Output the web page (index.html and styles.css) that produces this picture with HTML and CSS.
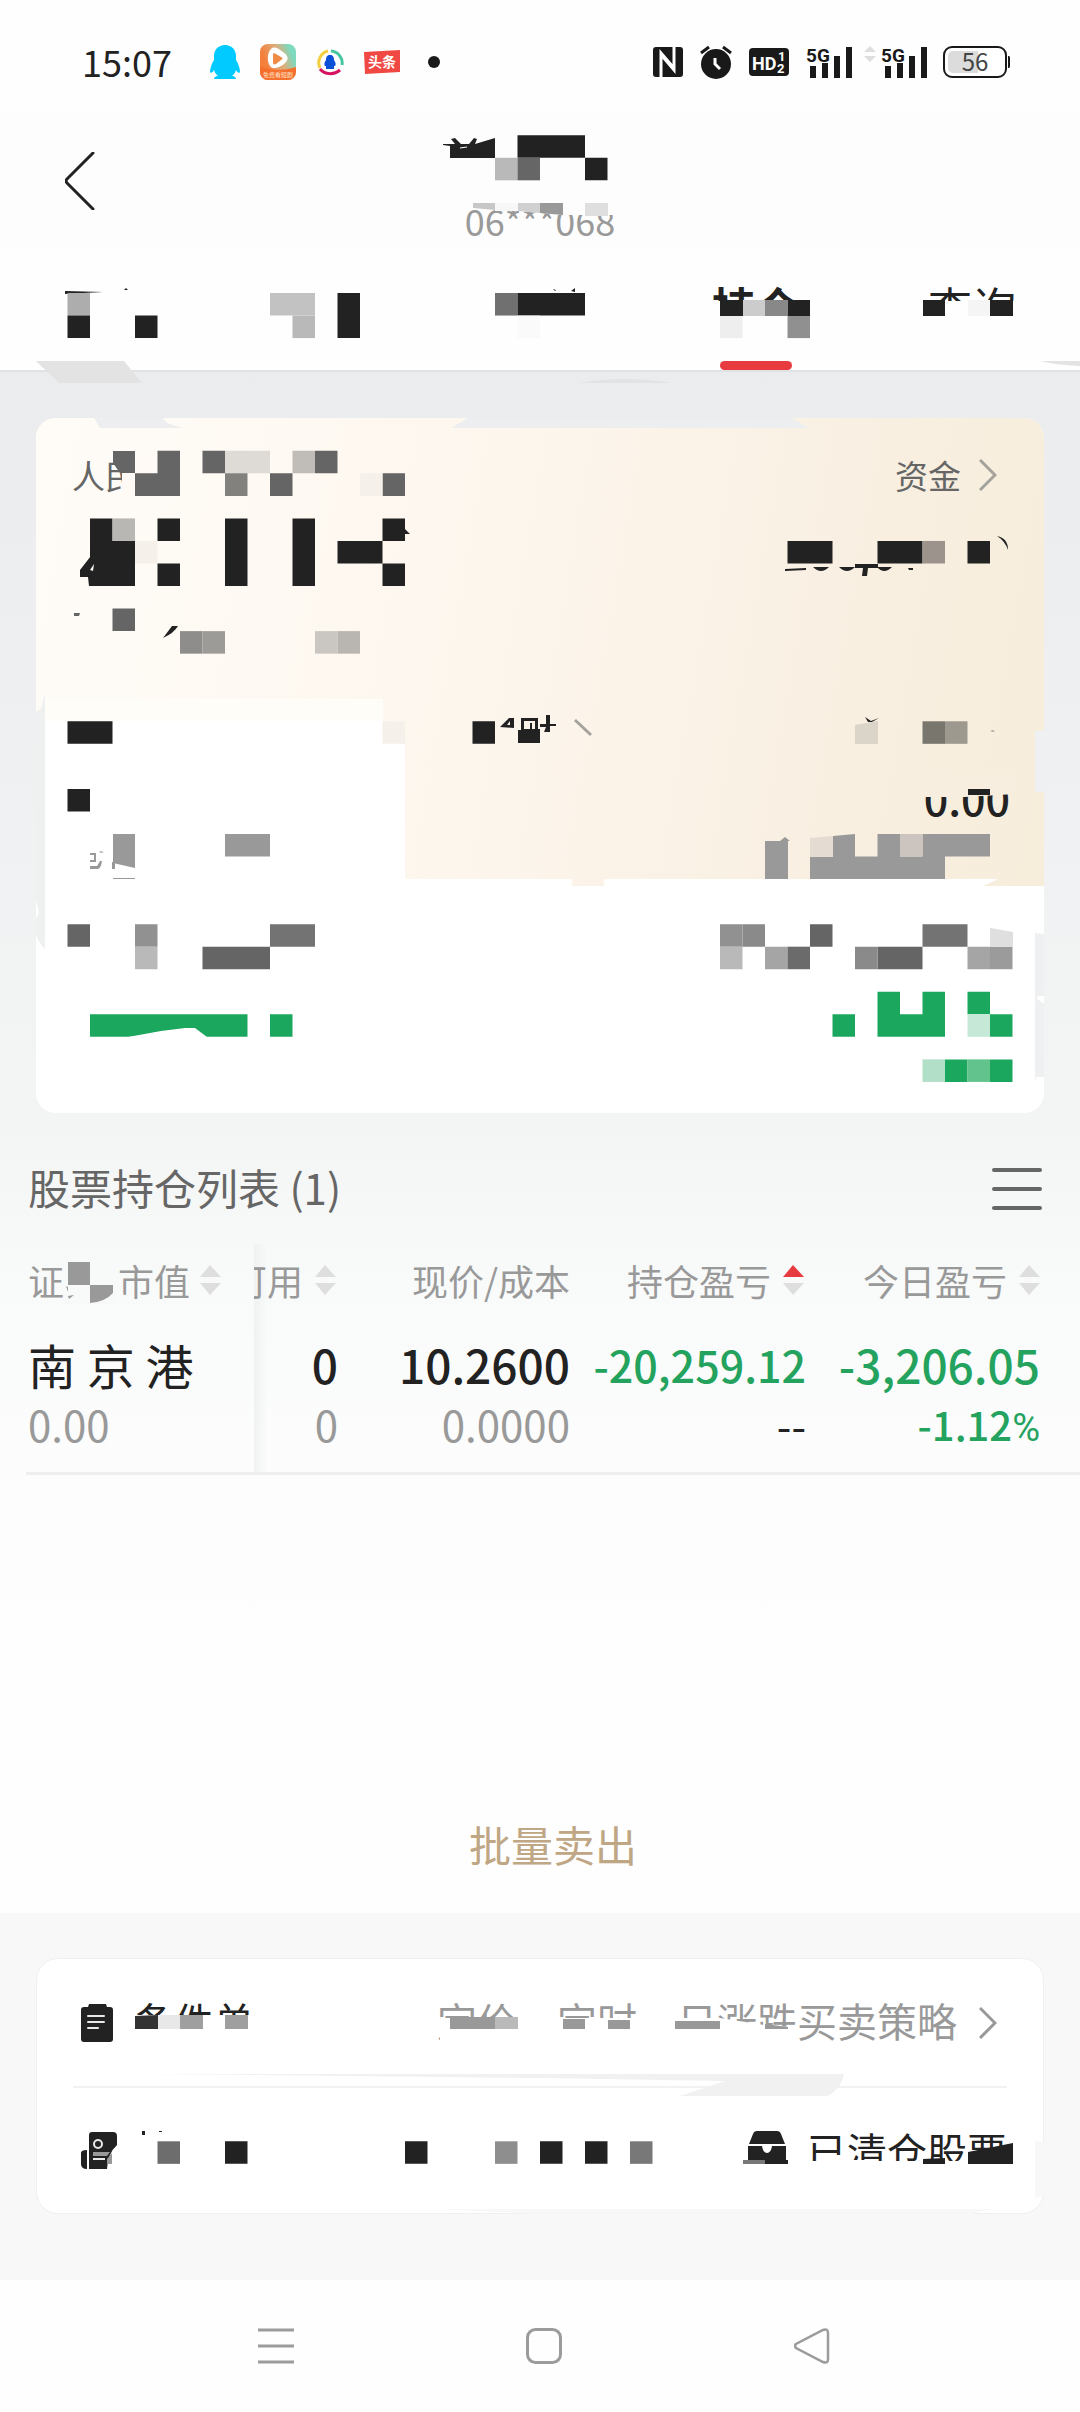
FILE: index.html
```html
<!DOCTYPE html>
<html lang="zh-CN">
<head>
    <meta charset="UTF-8">
    <meta name="viewport" content="width=device-width, initial-scale=1.0">
    <title>持仓</title>
    <link rel="stylesheet" href="styles.css">
</head>
<body>
    <div class="status-bar">
        <div class="status-left">
            <span class="clock">15:07</span>
            <svg class="app-icon" width="30" height="36" viewBox="0 0 30 36">
                <path fill="#00caff" d="M15 1C8 1 4 6 4 12v4C2 19 0 24 0 28c1 2 3 0 4-2 1 3 2 4 4 6-3 0-4 2-4 3h22c0-1-1-3-4-3 2-2 3-3 4-6 1 2 3 4 4 2 0-4-2-9-4-12v-4C26 6 22 1 15 1z"/>
            </svg>
            <svg class="app-icon" width="36" height="36" viewBox="0 0 36 36">
                <defs>
                    <linearGradient id="video-bg" x1="0" y1="0.4" x2="1" y2="0">
                        <stop offset="0.1" stop-color="#f4803c"/>
                        <stop offset="0.5" stop-color="#dcae7c"/>
                        <stop offset="0.8" stop-color="#7fd9bd"/>
                    </linearGradient>
                </defs>
                <rect width="36" height="36" rx="8" fill="url(#video-bg)"/>
                <path fill="#f56f2c" d="M0 22c9 5 24 5 36 1v5a8 8 0 0 1-8 8H8a8 8 0 0 1-8-8z"/>
                <path fill="#fff" d="M11 5c3-3 7-1 12 3 6 4 6 8 1 12-5 4-11 6-14 2C7 18 7 9 11 5z"/>
                <path fill="#f08b45" d="M13 11c0-2 1-2 3-1l5 3c2 1 2 2 0 3l-5 4c-2 1-3 0-3-2z"/>
                <text x="18" y="33" text-anchor="middle" class="tiny-label">免费看短剧</text>
            </svg>
            <svg class="app-icon" width="28" height="28" viewBox="0 0 28 28" fill="none" stroke-width="3">
                <path stroke="#f3cf3f" d="M4 20A12 12 0 0 1 12 3"/>
                <path stroke="#45c5a0" d="M15 3a12 12 0 0 1 11 14"/>
                <path stroke="#d8125f" d="M4 21c5 6 14 6 20 1"/>
                <path fill="#0a4fd8" d="M14 7c-3 0-4 2-4 5-2 3-2 5-1 6l1 0v3h8v-3h1c1-1 1-3-1-6 0-3-1-5-4-5z"/>
            </svg>
            <svg class="app-icon" width="36" height="24" viewBox="0 0 36 24">
                <path fill="#f04843" d="M0 2 36 0v22L1 24z"/>
                <text x="18" y="17" text-anchor="middle" class="news-label">头条</text>
            </svg>
            <span class="dot"></span>
        </div>
        <div class="status-right">
            <svg width="30" height="30" viewBox="0 0 30 30">
                <rect width="30" height="30" rx="3" fill="#191919"/>
                <path fill="none" stroke="#fff" stroke-width="3" d="M8 30V6l12 14M21 0v23L10 10"/>
            </svg>
            <svg class="alarm" width="32" height="34" viewBox="0 0 32 34">
                <circle cx="16" cy="19" r="15" fill="#191919"/>
                <path fill="none" stroke="#191919" stroke-width="3" d="M1 8l8-6M31 8l-8-6"/>
                <path fill="none" stroke="#fff" stroke-width="3" d="M15 13v6l5 5"/>
            </svg>
            <svg width="40" height="28" viewBox="0 0 40 28">
                <rect width="40" height="28" rx="4" fill="#191919"/>
                <text x="3" y="22" class="hd-label">HD</text>
                <text x="29" y="13" class="hd-number">1</text>
                <text x="28" y="25" class="hd-number">2</text>
            </svg>
            <svg class="signal" width="47" height="36" viewBox="0 0 47 36">
                <text x="0" y="18" class="net-label">5G</text>
                <path fill="#191919" d="M4 22h6v12H4zM16 19h6v15h-6zM28 12h6v22h-6zM40 3h6v31h-6z"/>
            </svg>
            <svg class="traffic" width="12" height="16" viewBox="0 0 12 16">
                <path fill="#dedede" d="M6 0l6 6H0zM6 16l6-6H0z"/>
            </svg>
            <svg class="signal-last" width="47" height="36" viewBox="0 0 47 36">
                <text x="0" y="18" class="net-label">5G</text>
                <path fill="#191919" d="M4 22h6v12H4zM16 19h6v15h-6zM28 12h6v22h-6zM40 3h6v31h-6z"/>
            </svg>
            <svg width="68" height="40" viewBox="0 -4 68 40">
                <rect x="1" y="1" width="62" height="30" rx="8" fill="#fff" stroke="#191919" stroke-width="2"/>
                <path fill="#dcdcdc" d="M10 5h25v22H10a5 5 0 0 1-5-5V10a5 5 0 0 1 5-5z"/>
                <path fill="#191919" d="M65 10h1a2 2 0 0 1 1 2v8a2 2 0 0 1-1 2h-1z"/>
                <text x="32" y="25" text-anchor="middle" class="battery-label">56</text>
            </svg>
        </div>
    </div>

    <header class="header">
        <button class="back-btn" aria-label="返回">
            <svg width="30" height="58" viewBox="0 0 30 58" fill="none" stroke="#222" stroke-width="3" stroke-linecap="round">
                <path d="M28 1L2 27q-2 2 0 4L28 57"/>
            </svg>
        </button>
        <div class="account">06***068</div>
        <!-- masked account name -->
        <svg class="mask" viewBox="0 112 1080 138" aria-hidden="true">
            <path fill="#fdfdfd" d="M518 205h95v10l-50 0-45-4z"/>
            <path fill="#222" d="M443 144h12l-4-5 4-1 6 6h8l5-6 3 1-2 5 20-6v20h-45v-12l-7-1z"/>
            <path stroke="#fdfdfd" d="M460 148l7-1"/>
            <g transform="scale(22.5 22.54)">
                <path fill="#222" d="M23 6h3v1h-3zM26 7h1v1h-1z"/>
                <path fill="#b9b9b9" d="M22 7h1v1h-1z"/>
                <path fill="#666" d="M23 7h1v1h-1z"/>
            </g>
            <path fill="#c7c7c7" d="M473 203h22v7l-22-2z"/>
            <path fill="#f7f7f7" d="M495 203h23v8h-23z"/>
            <path fill="#d0d0d0" d="M518 203h22v10l-22-2z"/>
            <path fill="#999" d="M540 203h23v12l-23-2z"/>
            <path fill="#dfdfdf" d="M585 203h23v13h-23z"/>
        </svg>
    </header>

    <nav class="tabs">
        <button class="tab" aria-label="买入"></button>
        <button class="tab" aria-label="卖出"></button>
        <button class="tab" aria-label="撤单"></button>
        <button class="tab active">持仓</button>
        <button class="tab">查询</button>
        <svg class="mask" viewBox="0 250 1080 134" aria-hidden="true">
            <path fill="#fefefe" d="M700 301h340v45H700z"/>
            <path fill="#222" d="M65 291l38 1-38 2zM124 290l2-2 2 2zM553 289l3 1-1 1zM571 291l4-3v4z"/>
            <g transform="scale(22.5 22.54)">
                <path fill="#adadad" d="M3 13h1v1h-1z"/>
                <path fill="#222" d="M3 14h1v1h-1zM6 14h1v1h-1zM15 13h1v2h-1zM24 13h2v1h-2z"/>
                <path fill="#c2c2c2" d="M12 13h2v1h-2z"/>
                <path fill="#b9b9b9" d="M13 14h1v1h-1z"/>
                <path fill="#707070" d="M22 13h1v1h-1z"/>
                <path fill="#222" d="M23 13h1v1h-1z"/>
                <path fill="#fafafa" d="M23 14h1v1h-1z"/>
                <path fill="#eee" d="M32 14h1v1h-1z"/>
                <path fill="#909090" d="M35 14h1v1h-1z"/>
            </g>
            <path fill="#222" d="M720 300h23v16h-23zM788 300h22v16h-22zM923 300h22v16h-22zM990 300h23v16h-23z"/>
            <path fill="#ccc" d="M743 300h22v16h-22z"/>
            <path fill="#888" d="M765 300h23v16h-23z"/>
            <path fill="#f5f5f5" d="M968 300h22v16h-22z"/>
            <path fill="#e3e3e3" d="M36 361h88l18 22H59zM1040 361h40v5q-25-1-40-5zM578 383q47-8 94 0z"/>
        </svg>
    </nav>

    <main class="main">
        <section class="summary">
            <div class="summary-top">
                <div class="summary-row">
                    <span>人民</span>
                    <a class="funds" href="#">资金
                        <svg width="18" height="32" viewBox="0 0 18 32" fill="none" stroke="#a5a29c" stroke-width="3"><path d="M1 1l15 15L1 31"/></svg>
                    </a>
                </div>
                <div class="amount">0.00</div>
            </div>
            <div class="summary-bottom"></div>
            <!-- masked balances -->
            <svg class="mask" viewBox="36 418 1008 695" aria-hidden="true">
                <path fill="#edeef0" d="M94 418h69l4 5 15 5h-82zM468 418h323l18 10H451z"/>
                <path fill="#fffdf8" d="M45 699h338v22H45z"/>
                <path fill="#fff" d="M45 721h360v158h167v7H36v-154h9z"/>
                <path fill="#fff" d="M604 879h394l-17 8H604z"/>
                <path fill="#eff0f0" d="M36 712l5-3 4-15v255q-7-7-9-15v-15l3-7-3-12z"/>
                <path fill="#eff0f1" d="M1035 731h9v61h-9zM1035 933l9 1v62l-7 0 7 6v75h-8l-1 6z"/>
                <path fill="#fff" d="M1036 998l8-2v8z"/>
                <path fill="#fffaf5" d="M122 455h58v42h-58z"/>
                <path fill="#f8eedf" d="M915 772h100v22l-50 3h-50z"/>
                <g transform="scale(22.5 22.54)">
                    <path fill="#656565" d="M7 20h1v1h-1zM9 20h1v1h-1zM14 20h1v1h-1zM6 21h2v1h-2zM12 21h1v1h-1zM17 21h1v1h-1zM5 27h1v1h-1z"/>
                    <path fill="#dedbd6" d="M10 20h2v1h-2z"/>
                    <path fill="#c0bcb7" d="M13 20h1v1h-1z"/>
                    <path fill="#83817d" d="M10 21h1v1h-1z"/>
                    <path fill="#f5f0e9" d="M16 21h1v1h-1zM6 24h1v1h-1zM17 32h1v1h-1z"/>
                    <path fill="#222" d="M4 23h1v1h1v2h-2zM7 23h1v1h-1zM7 25h1v1h-1zM10 23h1v3h-1zM13 23h1v3h-1zM17 23h1v1h-1zM15 24h2v1h-2zM17 25h1v1h-1z"/>
                    <path fill="#b9b7b3" d="M5 23h1v1h-1z"/>
                    <path fill="#8e8d8b" d="M8 28h1v1h-1z"/>
                    <path fill="#9d9b97" d="M9 28h1v1h-1z"/>
                    <path fill="#cac6c1" d="M14 28h1v1h-1z"/>
                    <path fill="#b9b5b0" d="M15 28h1v1h-1z"/>
                    <path fill="#222" d="M35 24h2v1h-2zM39 24h2v1h-2zM43 24h1v1h-1zM3 32h2v1h-2zM21 32h1v1h-1zM3 35h1v1h-1z"/>
                    <path fill="#9b938c" d="M41 24h1v1h-1z"/>
                    <path fill="#79766e" d="M41 32h1v1h-1z"/>
                    <path fill="#9e998f" d="M42 32h1v1h-1z"/>
                    <path fill="#999" d="M10 37h2v1h-2zM39 37h1v1h-1zM41 37h3v1h-3zM34 38h1v1h-1zM36 38h6v1h-6z"/>
                    <path fill="#ccc5bf" d="M40 37h1v1h-1z"/>
                    <path fill="#656565" d="M3 41h1v1h-1zM9 42h3v1h-3zM36 41h1v1h-1zM39 42h2v1h-2z"/>
                    <path fill="#919191" d="M6 41h1v1h-1zM32 41h1v1h-1z"/>
                    <path fill="#8a8a8a" d="M33 41h1v1h-1zM38 42h1v1h-1z"/>
                    <path fill="#737373" d="M12 41h2v1h-2zM41 41h2v1h-2z"/>
                    <path fill="#b9b9b9" d="M6 42h1v1h-1zM32 42h1v1h-1z"/>
                    <path fill="#a5a5a5" d="M34 42h1v1h-1zM43 42h1v1h-1z"/>
                    <path fill="#6b6b6b" d="M35 42h1v1h-1z"/>
                    <path fill="#9b9b9b" d="M44 42h1v1h-1z"/>
                    <path fill="#1ba85e" d="M4 45h7v1h-7zM12 45h1v1h-1zM37 45h1v1h-1zM39 44h1v1h1v-1h1v2h-3zM43 44h1v1h-1zM44 45h1v1h-1zM42 47h1v1h-1zM44 47h1v1h-1z"/>
                    <path fill="#c6e9d7" d="M43 45h1v1h-1z"/>
                    <path fill="#b1dfc7" d="M41 47h1v1h-1z"/>
                    <path fill="#62c38d" d="M43 47h1v1h-1z"/>
                </g>
                <path fill="#656565" d="M113 451h22v22h-15l-7-10zM74 613h6l-1 3h-5z"/>
                <path fill="#222" d="M90 551l5 2-5 6v27h-1l-1-9h-8v-7l14-18zM405 529l5 5h-10zM163 638l9-12h6q-4 7-15 12z"/>
                <path fill="#fffbf5" d="M90 570l4-6-1 7z"/>
                <path fill="#222" d="M785 569l21-1v2l-21 1zM813 567h16q-8 8-16 0zM839 567h16q-8 8-16 0zM855 564h23v4h-10l-1 8h-5l1-8h-8zM877 567h15q-8 8-15 0zM908 568h5v2h-4zM997 536q11 2 11 14-3-9-11-14z"/>
                <path fill="#222" d="M500 727l9-9h5v10zM521 718h17v11h2v14h-22v-13h3zM540 724h6v-9h4v9h6v2h-6v6h-6l2-5h-6zM865 717l6 4 8-3-7 4h-4z"/>
                <path fill="#fbf3e8" d="M507 725l3-4v4zM524 721h11v8h-3v-6h-2v6h-6z"/>
                <path fill="none" stroke="#a5a29c" stroke-width="3" d="M575 720l16 15"/>
                <path fill="#dad4c9" d="M855 725l23-4v23h-23z"/>
                <path fill="#999" d="M990 731l3-1 2 2zM90 853h6v9h-6v-2h4v-5h-4zM99 851l5 1-3 1zM90 866h7l3-5h2q-1 7-4 8h-8zM112 862h3v7h-3zM113 834h22v34l-22-5zM113 878h22v1h-22z"/>
                <path fill="#999" d="M765 841h15l5-4 5 4h-2v38h-23zM833 836l22-2v23h-22z"/>
                <path fill="#e4dcd2" d="M810 838l23-2v21h-23z"/>
                <path fill="#222" d="M968 789h22v6h-22z"/>
                <path fill="#dfdfdf" d="M990 928l23 4v15h-23z"/>
                <path fill="#fff" d="M128 1037l33-6 24-3h10l12 9z"/>
            </svg>
        </section>

        <div class="list-head">
            <h2>股票持仓列表 (1)</h2>
            <button class="menu-btn" aria-label="菜单">
                <svg width="50" height="44" viewBox="0 0 50 44" stroke="#666" stroke-width="4" stroke-linecap="round"><path d="M2 3h46M2 22h46M2 41h46"/></svg>
            </button>
        </div>

        <div class="holdings-wrap">
            <table class="holdings">
                <colgroup>
                    <col class="col-name"><col class="col-usable"><col class="col-price"><col class="col-profit"><col>
                </colgroup>
                <thead>
                    <tr>
                        <th class="name-cell"><span class="th-inner"><span class="th-name">证券</span><span>市值</span><svg class="sort" viewBox="0 0 21 30"><path d="M10 0l11 12H0zM10 30l11-12H0z"/></svg></span></th>
                        <th class="usable-cell"><span class="th-inner">可用<svg class="sort" viewBox="0 0 21 30"><path d="M10 0l11 12H0zM10 30l11-12H0z"/></svg></span></th>
                        <th class="price-head"><span class="th-inner">现价/成本</span></th>
                        <th><span class="th-inner">持仓盈亏<svg class="sort" viewBox="0 0 21 30"><path class="sort-on" d="M10 0l11 12H0z"/><path d="M10 30l11-12H0z"/></svg></span></th>
                        <th class="last-cell"><span class="th-inner">今日盈亏<svg class="sort" viewBox="0 0 21 30"><path d="M10 0l11 12H0zM10 30l11-12H0z"/></svg></span></th>
                    </tr>
                </thead>
                <tbody>
                    <tr>
                        <td class="name-cell"><div class="stock-name">南 京 港</div><div class="sub">0.00</div></td>
                        <td><div class="value">0</div><div class="sub">0</div></td>
                        <td><div class="value">10.2600</div><div class="sub">0.0000</div></td>
                        <td><div class="value value-long down">-20,259.12</div><div class="sub dark">--</div></td>
                        <td class="last-cell"><div class="value down">-3,206.05</div><div class="sub down">-1.12<span class="percent">%</span></div></td>
                    </tr>
                </tbody>
            </table>
            <svg class="mask" viewBox="0 1244 1080 76" aria-hidden="true">
                <path fill="#f8f9f9" d="M63 1262h55v42H63z"/>
                <path fill="#999" d="M68 1262h22v23H68zM90 1285h23v8q-8 9-23 10zM66 1286l2 1v5l-1-3zM68 1296l6-1-5 4z"/>
            </svg>
        </div>

        <button class="batch-sell">批量卖出</button>
    </main>

    <section class="tools">
        <div class="tools-card">
            <a class="tool-row" href="#">
                <svg class="tool-icon" width="32" height="38" viewBox="0 0 32 38">
                    <path fill="#222" d="M3 3h4l1-3h17l1 3h3q3 0 3 3v29q0 3-3 3H3q-3 0-3-3V6q0-3 3-3z"/>
                    <path stroke="#e8e8e8" stroke-width="2" stroke-linecap="round" d="M7 12h16M7 18h16M7 24h10"/>
                </svg>
                <span class="tool-name">条件单</span>
                <span class="tool-desc">定价、定时、日涨跌买卖策略</span>
                <svg class="chevron" width="18" height="32" viewBox="0 0 18 32" fill="none" stroke="#999" stroke-width="3"><path d="M1 1l15 15L1 31"/></svg>
            </a>
            <div class="tool-row">
                <svg class="tool-icon" width="36" height="37" viewBox="0 0 36 37">
                    <path fill="#222" d="M8 3q0-3 3-3h21q4 0 4 4v9q-9 8-10 24H8zM0 21q0-3 6-3v19q-6 0-6-5z"/>
                    <path fill="#999" d="M12 20h17l-3 4H12zM26 27l5-6v11h-5z"/>
                    <circle cx="17" cy="12" r="4" fill="none" stroke="#e8e8e8" stroke-width="2"/>
                    <path stroke="#e8e8e8" stroke-width="2" d="M12 27h12"/>
                </svg>
                <a class="cleared" href="#">
                    <svg width="38" height="37" viewBox="0 0 38 37">
                        <path fill="#222" d="M5 3q1-3 4-3h20q3 0 4 3l4 10H1zM0 15h14q1 7 5 7t5-7h14v19q0 3-3 3H3q-3 0-3-3z"/>
                        <circle cx="19" cy="16" r="2" fill="#fff"/>
                    </svg>
                    已清仓股票
                </a>
            </div>
            <!-- masked labels -->
            <svg class="mask" viewBox="36 1958 1008 256" aria-hidden="true">
                <path fill="#fff" d="M134 2015h120v32H134zM440 2018h280l50 8 28 1v22H440v-31zM742 2161h276v18H742z"/>
                <path fill="#fff" d="M842 2154h8l2 6h23v2h-34zM965 2158l8 4h-18z"/>
                <path fill="#333" d="M135 2016l23-1v14h-23z"/>
                <path fill="#e8e8e8" d="M158 2015h22v14h-22z"/>
                <path fill="#9f9f9f" d="M180 2015h23v14h-23zM225 2015h23v14h-23z"/>
                <path fill="#999" d="M450 2017h45v12h-45zM563 2019h22v10h-22zM608 2020h22v9h-22zM675 2021h45v8h-45zM765 2024l23 3v2h-23z"/>
                <path fill="#bababa" d="M495 2017h23v12h-23z"/>
                <path fill="#f1f1f1" d="M145 2074h699q-3 15-16 22H680l45-15-185-3z"/>
                <g transform="scale(22.5 22.54)">
                    <path fill="#222" d="M10 95h1v1h-1zM18 95h1v1h-1zM24 95h1v1h-1zM26 95h1v1h-1z"/>
                    <path fill="#6d6d6d" d="M7 95h1v1h-1z"/>
                    <path fill="#8e8e8e" d="M22 95h1v1h-1z"/>
                    <path fill="#787878" d="M28 95h1v1h-1z"/>
                </g>
                <path fill="#787878" d="M743 2160h22v4h-22z"/>
                <path fill="#222" d="M765 2160h23v4h-23zM923 2159l22-1v6h-22zM968 2152l45-9v21h-45zM142 2131h3v4h-3zM159 2131h3v1h-3z"/>
                <path fill="#f8f8f8" d="M1035 2140l9 3v52l-9 3zM438 2209h554l-22 5H540z"/>
            </svg>
        </div>
    </section>

    <nav class="system-nav">
        <button aria-label="最近任务"><svg width="36" height="36" viewBox="0 0 36 36" stroke="#9b9b9b" stroke-width="3"><path d="M0 2h36M0 18h36M0 34h36"/></svg></button>
        <button aria-label="主屏幕"><svg width="36" height="36" viewBox="0 0 36 36" fill="none" stroke="#9b9b9b" stroke-width="3"><rect x="1.5" y="1.5" width="33" height="33" rx="8"/></svg></button>
        <button aria-label="返回上一级"><svg width="36" height="36" viewBox="0 0 36 36" fill="none" stroke="#9b9b9b" stroke-width="2.5"><path d="M2 16q-2 2 0 4l27 14q5 2 5-3V5q0-5-5-3z"/></svg></button>
    </nav>
</body>
</html>
```
FILE: styles.css
```css
* {
    box-sizing: border-box;
}
body {
    margin: 0;
    background-color: #fefefe;
    color: #222;
    font-family: "Noto Sans CJK SC", "Noto Sans", sans-serif;
}
button {
    padding: 0;
    border: none;
    background: none;
    font-family: inherit;
    color: inherit;
    cursor: pointer;
}
a {
    color: inherit;
    text-decoration: none;
}
svg {
    display: block;
    flex-shrink: 0;
}
.mask {
    position: absolute;
    top: 0;
    left: 0;
    width: 100%;
    pointer-events: none;
}

/* status bar */
.status-bar {
    display: flex;
    justify-content: space-between;
    height: 112px;
    padding: 12px 69px 0 82px;
}
.status-left,
.status-right {
    display: flex;
    align-items: center;
    height: 100px;
}
.clock {
    width: 128px;
    font-size: 36px;
    line-height: 40px;
    padding-bottom: 2px;
}
.app-icon {
    margin-right: 20px;
}
.dot {
    width: 12px;
    height: 12px;
    margin-left: 8px;
    border-radius: 50%;
    background-color: #191919;
}
.status-right {
    gap: 17px;
}
.traffic {
    align-self: flex-start;
    margin: 34px -12px 0 -6px;
}
.signal-last {
    margin-right: -2px;
}
.tiny-label {
    font-size: 6px;
    fill: #ffe2c8;
}
.news-label {
    font-size: 14px;
    font-weight: 700;
    fill: #fff;
}
.hd-label,
.hd-number,
.net-label {
    font-family: Roboto, sans-serif;
    font-weight: 700;
}
.hd-label {
    font-size: 18px;
    fill: #fff;
}
.hd-number {
    font-size: 13px;
    fill: #fff;
}
.net-label {
    font-size: 19px;
    fill: #191919;
}
.battery-label {
    font-size: 24px;
    fill: #444;
}

/* header and tabs */
.header {
    position: relative;
    display: flex;
    justify-content: center;
    align-items: flex-end;
    height: 138px;
    padding-bottom: 10px;
    background-color: #fdfdfd;
}
.back-btn {
    position: absolute;
    left: 65px;
    top: 40px;
}
.account {
    color: #999;
    font-size: 36px;
    line-height: 40px;
}
.tabs {
    position: relative;
    display: grid;
    grid-template-columns: repeat(5, 1fr);
    height: 122px;
    border-bottom: 2px solid #e1e2e3;
}
.tab {
    position: relative;
    padding-bottom: 8px;
    font-size: 44px;
    line-height: 104px;
}
.active {
    font-weight: 700;
}
.active::after {
    content: "";
    position: absolute;
    bottom: 0;
    left: 50%;
    width: 72px;
    height: 9px;
    margin-left: -36px;
    border-radius: 5px;
    background-color: #e73b3f;
}
.tabs .mask {
    z-index: 1;
}

/* account summary */
.main {
    padding-top: 46px;
    background: linear-gradient(#ebecee, #f3f4f4 48%, #f9fafa 60%, #fdfdfd 73%, #fefefe 85%);
}
.summary {
    position: relative;
    margin: 0 36px;
    border-radius: 20px;
    overflow: hidden;
    background-color: #fff;
}
.summary-top {
    display: flex;
    flex-direction: column;
    justify-content: space-between;
    min-height: 468px;
    padding: 37px 34px 65px 36px;
    background: linear-gradient(100deg, #fffcf8, #fdf6ed 45%, #f8efe1 80%, #f6eddb);
}
.summary-bottom {
    min-height: 227px;
}
.summary-row {
    display: flex;
    justify-content: space-between;
    color: #666;
    font-size: 33px;
    line-height: 40px;
}
.funds {
    display: flex;
    align-items: center;
    gap: 18px;
    padding-right: 13px;
}
.amount {
    font-size: 43px;
    font-weight: 500;
    line-height: 48px;
    text-align: right;
}

/* holdings */
.list-head {
    display: flex;
    justify-content: space-between;
    align-items: center;
    padding: 46px 38px 25px 28px;
}
.list-head h2 {
    margin: 0;
    padding-bottom: 4px;
    color: #666;
    font-size: 42px;
    font-weight: 400;
    line-height: 56px;
}
.holdings-wrap {
    position: relative;
}
.holdings {
    width: 100%;
    table-layout: fixed;
    border-spacing: 0;
}
.col-name {
    width: 254px;
}
.col-usable {
    width: 84px;
}
.col-price {
    width: 232px;
}
.col-profit {
    width: 236px;
}
.holdings th {
    height: 76px;
    padding: 0 2px 4px 0;
    color: #999;
    font-size: 36px;
    font-weight: 400;
    line-height: 52px;
    white-space: nowrap;
}
.holdings td {
    padding: 14px 0 18px;
    border-bottom: 3px solid #edefef;
    text-align: right;
    white-space: nowrap;
}
.th-inner {
    display: flex;
    justify-content: flex-end;
    align-items: center;
    gap: 12px;
}
.holdings .name-cell {
    padding-left: 28px;
    text-align: left;
}
.holdings td.name-cell {
    border-image: linear-gradient(to right, transparent 28px, #edefef 28px) 3;
}
.name-cell .th-inner {
    justify-content: flex-start;
    gap: 10px;
}
.th-name {
    width: 80px;
}
.holdings th.usable-cell {
    overflow: hidden;
}
.holdings .price-head {
    padding-right: 0;
}
.holdings th:nth-child(2),
.holdings td:nth-child(2) {
    background: linear-gradient(to right, #f0f1f1, transparent 14px);
}
.holdings .last-cell {
    padding-right: 40px;
}
.sort {
    width: 21px;
    height: 30px;
    fill: #dedede;
}
.sort-on {
    fill: #e73b3f;
}
.stock-name,
.value,
.sub {
    height: 60px;
    line-height: 60px;
}
.stock-name {
    font-size: 48px;
}
.value {
    font-size: 46px;
    font-weight: 500;
}
.value-long {
    font-size: 43px;
}
.sub {
    color: #999;
    font-size: 42px;
}
.holdings .down {
    color: #24a35f;
    font-weight: 500;
}
.sub.down {
    font-size: 40px;
}
.sub.dark {
    color: #222;
}
.percent {
    font-family: Roboto, sans-serif;
    font-size: 38px;
    font-weight: 400;
}
.batch-sell {
    display: block;
    width: 100%;
    margin-top: 336px;
    padding: 0 0 36px 26px;
    color: #bfa684;
    font-size: 42px;
    line-height: 66px;
}

/* tools */
.tools {
    padding: 45px 36px 66px;
    background-color: #f8f8f8;
}
.tools-card {
    position: relative;
    padding: 0 36px;
    border: 1px solid #f0f0f0;
    border-radius: 22px;
    background-color: #fff;
}
.tools-card .mask {
    top: -1px;
    left: -1px;
    width: calc(100% + 2px);
}
.tool-row {
    display: flex;
    align-items: center;
    height: 127px;
    padding-left: 8px;
    font-size: 40px;
}
.tool-row + .tool-row {
    border-top: 2px solid #f2f2f2;
}
.tool-name,
.tool-desc {
    padding-bottom: 5px;
}
.tool-name {
    margin-left: 21px;
}
.tool-desc {
    margin-left: auto;
    color: #999;
}
.chevron {
    margin: 0 10px 0 22px;
}
.cleared {
    display: flex;
    align-items: center;
    gap: 21px;
    margin-left: auto;
    padding-bottom: 2px;
}

/* system navigation */
.system-nav {
    display: grid;
    grid-template-columns: repeat(3, 1fr);
    height: 132px;
    padding: 0 134px 0 142px;
}
.system-nav button {
    display: flex;
    justify-content: center;
    align-items: center;
}
```
